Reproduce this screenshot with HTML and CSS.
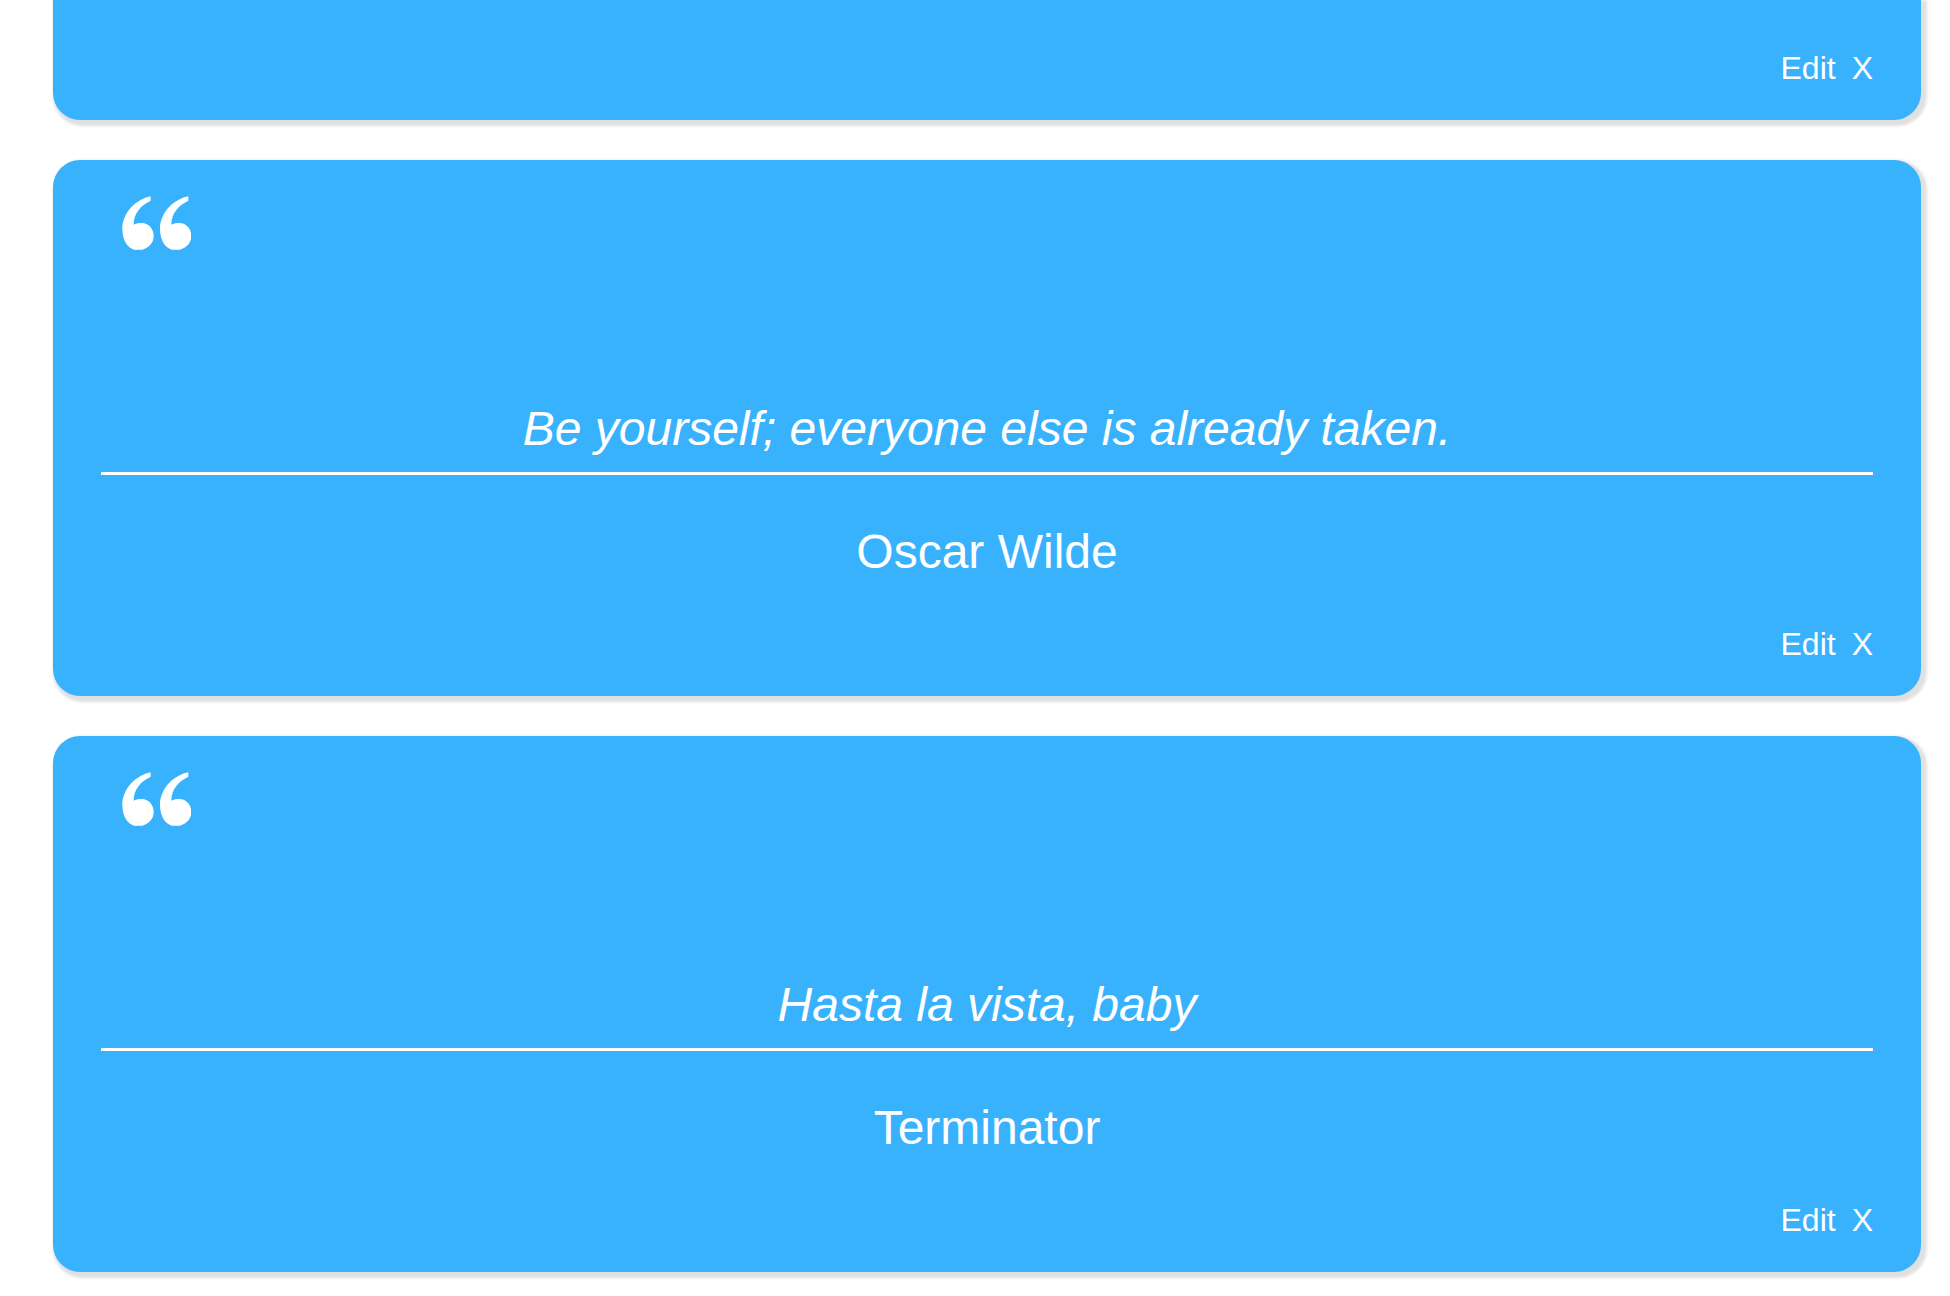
FILE: index.html
```html
<!DOCTYPE html>
<html lang="en">
<head>
<meta charset="utf-8">
<title>Quotes</title>
<link rel="stylesheet" href="styles.css">
</head>
<body>
<svg class="symbols" aria-hidden="true">
  <symbol id="quote-mark" viewBox="0 0 207 162">
    <path id="mark" d="M86 1V14C57 28 35 51 35 86C44 81 52 80 60 81C80 82 95 98 95 120C95 140 82 155 61 161H36C15 154 1 130 1 98C1 54 35 14 80 2Z"/>
    <use href="#mark" x="113"/>
  </symbol>
</svg>
<main class="quotes">
  <article class="card card-continued">
    <div class="actions"><button type="button">Edit</button><button type="button" aria-label="Delete">X</button></div>
  </article>
  <article class="card">
    <svg class="mark" aria-hidden="true"><use href="#quote-mark"/></svg>
    <p class="text">Be yourself; everyone else is already taken.</p>
    <p class="author">Oscar Wilde</p>
    <div class="actions"><button type="button">Edit</button><button type="button" aria-label="Delete">X</button></div>
  </article>
  <article class="card">
    <svg class="mark" aria-hidden="true"><use href="#quote-mark"/></svg>
    <p class="text">Hasta la vista, baby</p>
    <p class="author">Terminator</p>
    <div class="actions"><button type="button">Edit</button><button type="button" aria-label="Delete">X</button></div>
  </article>
</main>
</body>
</html>
```
FILE: styles.css
```css
* {
  box-sizing: border-box;
}

body {
  margin: 0;
  background: #fff;
  color: #fff;
  font-family: "Liberation Sans", Arial, sans-serif;
}

.symbols {
  display: block;
  width: 0;
  height: 0;
}

.quotes {
  display: flex;
  flex-direction: column;
  gap: 40px;
  padding: 0 29px 24px 53px;
}

.card {
  display: flex;
  flex-direction: column;
  padding: 36px 48px 34px;
  border-radius: 27px;
  background: #39b2fe;
  box-shadow: 3px 3px 3px 3px #dfe0df;
}

.card-continued {
  padding-top: 50px;
  border-radius: 0 0 27px 27px;
}

.mark {
  width: 69px;
  height: 54px;
  margin: 0 0 151px 21px;
  fill: #fff;
}

.text,
.author {
  margin: 0;
  font-size: 48px;
  line-height: 56px;
  text-align: center;
}

.text {
  padding-bottom: 15px;
  border-bottom: 3px solid #fff;
  font-style: italic;
}

.author {
  padding: 49px 0 46px;
}

.actions {
  display: flex;
  justify-content: flex-end;
  gap: 16px;
}

.actions button {
  padding: 0;
  border: 0;
  background: none;
  color: inherit;
  font: inherit;
  font-size: 32px;
  line-height: 36px;
  cursor: pointer;
}
```
